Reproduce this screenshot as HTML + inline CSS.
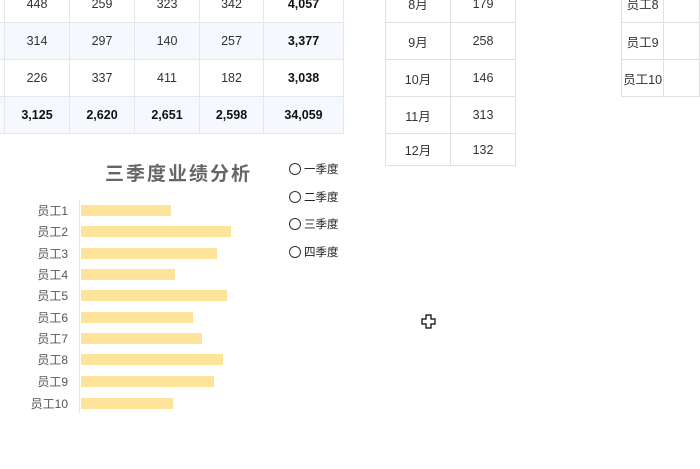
<!DOCTYPE html>
<html><head><meta charset="utf-8"><style>
body{margin:0;width:700px;height:469px;background:#fff;position:relative;overflow:hidden;font-family:"Liberation Sans","Noto Sans CJK SC",sans-serif;font-size:12.5px;color:#333}
.a{position:absolute}
table{border-collapse:collapse;position:absolute}
td{border:1px solid #e3e8ef;text-align:center;padding:0}
.m td{border-color:#e0e0e0}
.alt td{background:#f5f8fc}
b{font-weight:bold;color:#111}
.lbl{position:absolute;right:632px;font-size:12px;color:#555;text-align:right;white-space:nowrap}
.bar{position:absolute;left:81px;height:11px;background:#fde49a}
.lg{position:absolute;left:289px;font-size:11.5px;color:#222;white-space:nowrap}
.lg i{display:inline-block;width:10px;height:10px;border:1px solid #333;border-radius:50%;vertical-align:-2px;margin-right:3px}
</style></head><body>
<table style="left:-61px;top:-16px">
<tr style="height:38px"><td style="width:64px"></td><td style="width:64px">448</td><td style="width:64px">259</td><td style="width:64px">323</td><td style="width:63px">342</td><td style="width:79px"><b>4,057</b></td></tr>
<tr class="alt" style="height:37px"><td></td><td>314</td><td>297</td><td>140</td><td>257</td><td><b>3,377</b></td></tr>
<tr style="height:37px"><td></td><td>226</td><td>337</td><td>411</td><td>182</td><td><b>3,038</b></td></tr>
<tr class="alt" style="height:37px"><td></td><td><b>3,125</b></td><td><b>2,620</b></td><td><b>2,651</b></td><td><b>2,598</b></td><td><b>34,059</b></td></tr>
</table>
<table class="m" style="left:385px;top:-16px">
<tr style="height:38px"><td style="width:64px">8月</td><td style="width:64px">179</td></tr>
<tr style="height:37px"><td>9月</td><td>258</td></tr>
<tr style="height:37px"><td>10月</td><td>146</td></tr>
<tr style="height:37px"><td>11月</td><td>313</td></tr>
<tr style="height:32px"><td>12月</td><td>132</td></tr>
</table>
<table class="m" style="left:621px;top:-16px">
<tr style="height:38px"><td style="width:64px">员工8</td><td style="width:64px"></td></tr>
<tr style="height:37px"><td>员工9</td><td></td></tr>
<tr style="height:37px"><td>员工10</td><td></td></tr>
</table>
<div class="a" style="left:60px;top:159px;width:237px;text-align:center;font-size:19px;letter-spacing:2px;font-weight:bold;color:#666">三季度业绩分析</div>
<div class="a" style="left:79px;top:200px;width:1px;height:213px;background:#e5e5e5"></div>
<div class="bar" style="top:205px;width:90px"></div><div class="lbl" style="top:202px">员工1</div>
<div class="bar" style="top:226px;width:150px"></div><div class="lbl" style="top:223px">员工2</div>
<div class="bar" style="top:248px;width:136px"></div><div class="lbl" style="top:245px">员工3</div>
<div class="bar" style="top:269px;width:94px"></div><div class="lbl" style="top:266px">员工4</div>
<div class="bar" style="top:290px;width:146px"></div><div class="lbl" style="top:287px">员工5</div>
<div class="bar" style="top:312px;width:112px"></div><div class="lbl" style="top:309px">员工6</div>
<div class="bar" style="top:333px;width:121px"></div><div class="lbl" style="top:330px">员工7</div>
<div class="bar" style="top:354px;width:142px"></div><div class="lbl" style="top:351px">员工8</div>
<div class="bar" style="top:376px;width:133px"></div><div class="lbl" style="top:373px">员工9</div>
<div class="bar" style="top:398px;width:92px"></div><div class="lbl" style="top:395px">员工10</div>
<div class="lg" style="top:161px"><i></i>一季度</div>
<div class="lg" style="top:189px"><i></i>二季度</div>
<div class="lg" style="top:216px"><i></i>三季度</div>
<div class="lg" style="top:244px"><i></i>四季度</div>
<svg class="a" style="left:421px;top:314px" width="15" height="15" viewBox="0 0 15 15"><path d="M5 1h5v4h4v5h-4v4H5v-4H1V5h4z" fill="#fff" stroke="#000" stroke-width="1.2"/></svg>
</body></html>
